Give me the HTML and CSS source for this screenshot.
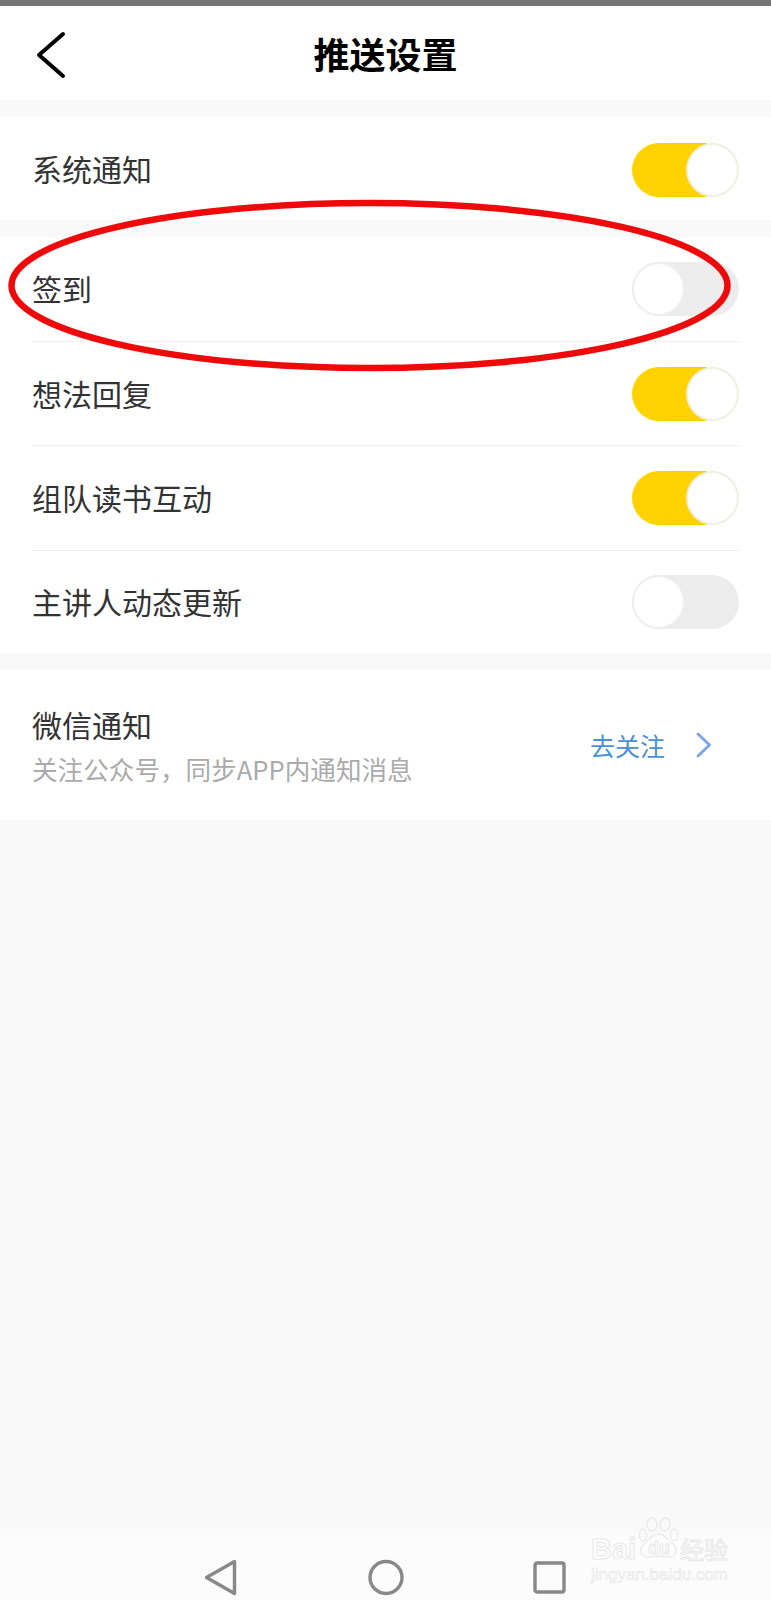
FILE: index.html
```html
<!DOCTYPE html>
<html lang="zh-CN">
<head>
  <meta charset="UTF-8">
  <meta name="viewport" content="width=device-width, initial-scale=1">
  <title>推送设置</title>
  <link rel="stylesheet" href="styles.css">
</head>
<body>

  <div class="status-bar"></div>

  <header class="top-bar">
    <svg class="back" width="30" height="48" viewBox="0 0 30 48">
      <path d="M27 3 L3 24 L27 45" fill="none" stroke="#000" stroke-width="4" stroke-linecap="round" stroke-linejoin="round"/>
    </svg>
    <h1>推送设置</h1>
  </header>

  <main class="content">
    <section class="group group-system">
      <div class="row row-system">
        <span class="label">系统通知</span>
        <div class="toggle on"><span class="knob"></span></div>
      </div>
    </section>

    <section class="group group-list">
      <div class="row row-tall">
        <span class="label">签到</span>
        <div class="toggle"><span class="knob"></span></div>
      </div>
      <div class="row">
        <span class="label">想法回复</span>
        <div class="toggle on"><span class="knob"></span></div>
      </div>
      <div class="row row-tall">
        <span class="label">组队读书互动</span>
        <div class="toggle on"><span class="knob"></span></div>
      </div>
      <div class="row row-last">
        <span class="label">主讲人动态更新</span>
        <div class="toggle"><span class="knob"></span></div>
      </div>
    </section>

    <section class="group group-wechat">
      <div class="row-wechat">
        <div class="wechat-text">
          <span class="label">微信通知</span>
          <span class="sub">关注公众号，同步APP内通知消息</span>
        </div>
        <a class="follow">去关注</a>
        <svg class="chevron" width="16" height="26" viewBox="0 0 16 26">
          <path d="M2 2 L13.5 13 L2 24" fill="none" stroke="#7ba4ea" stroke-width="2.8" stroke-linecap="round" stroke-linejoin="round"/>
        </svg>
      </div>
    </section>
  </main>

  <nav class="nav-bar">
    <svg class="nav-icon nav-back" width="33" height="37" viewBox="0 0 33 37">
      <path d="M30.5 2.5 L2.5 18.5 L30.5 34.5 Z" fill="none" stroke="#888" stroke-width="3.4" stroke-linejoin="round"/>
    </svg>
    <svg class="nav-icon nav-home" width="36" height="37" viewBox="0 0 36 37">
      <ellipse cx="18" cy="18.5" rx="16" ry="16" fill="none" stroke="#888" stroke-width="3.4"/>
    </svg>
    <svg class="nav-icon nav-recent" width="33" height="33" viewBox="0 0 33 33">
      <rect x="2" y="2" width="29" height="29" rx="2" fill="none" stroke="#888" stroke-width="3.4"/>
    </svg>
  </nav>

  <!-- red hand-drawn mark over the 签到 row -->
  <svg class="mark" width="771" height="1600" viewBox="0 0 771 1600">
    <ellipse cx="369.5" cy="285.5" rx="358" ry="82.5" fill="none" stroke="#ee0a0a" stroke-width="6.5"/>
  </svg>

  <div class="watermark">
    <div class="wm-top">
      <span class="wm-bai">Bai</span>
      <span class="wm-paw">
        <svg width="41" height="41" viewBox="0 0 41 41">
          <g fill="none" stroke="#eaeaea" stroke-width="1.4">
            <ellipse cx="5" cy="18" rx="3.5" ry="6"/>
            <ellipse cx="14" cy="7.5" rx="5" ry="6.5"/>
            <ellipse cx="27" cy="7.5" rx="5" ry="6.5"/>
            <ellipse cx="36" cy="18" rx="3.5" ry="6"/>
            <path d="M20.5 17 C27 17 30 23 35 27 C41 32 38 41 30 40 C24 39 17 39 11 40 C3 41 0 32 6 27 C11 23 14 17 20.5 17 Z"/>
          </g>
        </svg>
        <span class="wm-du">du</span>
      </span>
      <span class="wm-cn">经验</span>
    </div>
    <div class="wm-url">jingyan.baidu.com</div>
  </div>

</body>
</html>
```

FILE: styles.css
```css
* {
  box-sizing: border-box;
}
body {
  margin: 0;
  width: 771px;
  height: 1600px;
  display: flex;
  flex-direction: column;
  position: relative;
  overflow: hidden;
  background: #f9f9f9;
  font-family: "Noto Sans CJK SC", "Liberation Sans", sans-serif;
  color: #333;
}

.status-bar {
  height: 6px;
  background: #757575;
}

.top-bar {
  height: 94px;
  background: #fff;
  display: flex;
  align-items: center;
  justify-content: center;
  position: relative;
}
.top-bar h1 {
  margin: 0;
  font-size: 36px;
  line-height: 1;
  font-weight: 700;
  color: #000;
}
.back {
  position: absolute;
  left: 36px;
  top: 25px;
}

.content {
  flex: 1;
}
.group {
  background: #fff;
  margin-top: 17px;
}

.row {
  margin: 0 32px;
  height: 104px;
  display: flex;
  align-items: center;
  justify-content: space-between;
  border-bottom: 1px solid #eeeeee;
}
.row-tall {
  height: 105px;
}
.row-last {
  height: 102px;
  border-bottom: none;
}
.row-system {
  height: 103px;
  padding-top: 3px;
  border-bottom: none;
}
.label {
  font-size: 30px;
  line-height: 40px;
  color: #333;
}
.row .label {
  margin-bottom: 2px;
}
.row-system .label {
  margin-bottom: 4px;
}

.toggle {
  width: 107px;
  height: 54px;
  border-radius: 27px;
  background: #ececec;
  display: flex;
  justify-content: flex-start;
}
.toggle.on {
  background: linear-gradient(to right, #ffd200 70%, #fff 70%);
  justify-content: flex-end;
}
.knob {
  width: 53px;
  height: 54px;
  border-radius: 50%;
  background: #fff;
  border: 2px solid #eeeeee;
}
.toggle.on .knob {
  border-color: #f0efdf;
}

.row-wechat {
  height: 150px;
  padding: 0 59px 0 32px;
  display: flex;
  align-items: center;
}
.wechat-text {
  flex: 1;
  display: flex;
  flex-direction: column;
  gap: 7px;
}
.sub {
  font-size: 25.6px;
  line-height: 36px;
  color: #aaaaaa;
}
.follow {
  font-size: 25px;
  line-height: 36px;
  color: #4a90d9;
}
.chevron {
  margin-left: 31px;
}

.nav-bar {
  height: 65px;
  background: #fcfcfc;
  position: relative;
}
.nav-icon {
  position: absolute;
}
.nav-back {
  left: 204px;
  top: 24px;
}
.nav-home {
  left: 368px;
  top: 24px;
}
.nav-recent {
  left: 533px;
  top: 26px;
}

.mark {
  position: absolute;
  left: 0;
  top: 0;
  pointer-events: none;
}

.watermark {
  position: absolute;
  left: 591px;
  top: 1517px;
  width: 140px;
  font-family: "Liberation Sans", sans-serif;
}
.wm-top {
  display: flex;
  align-items: flex-end;
  height: 49px;
  padding-bottom: 3px;
}
.wm-bai {
  width: 47px;
  font-size: 29px;
  line-height: 28px;
  font-weight: 700;
  color: transparent;
  -webkit-text-stroke: 1px #e9e9e9;
}
.wm-paw {
  position: relative;
  width: 42px;
  height: 46px;
}
.wm-paw svg {
  display: block;
}
.wm-du {
  position: absolute;
  left: 10px;
  top: 22px;
  font-size: 18px;
  line-height: 18px;
  font-weight: 700;
  color: transparent;
  -webkit-text-stroke: 1px #e9e9e9;
}
.wm-cn {
  font-family: "Noto Sans CJK SC", sans-serif;
  font-size: 24px;
  line-height: 28px;
  color: transparent;
  -webkit-text-stroke: 1px #e9e9e9;
}
.wm-url {
  font-size: 17px;
  line-height: 18px;
  color: transparent;
  -webkit-text-stroke: 0.7px #e9e9e9;
}
```
